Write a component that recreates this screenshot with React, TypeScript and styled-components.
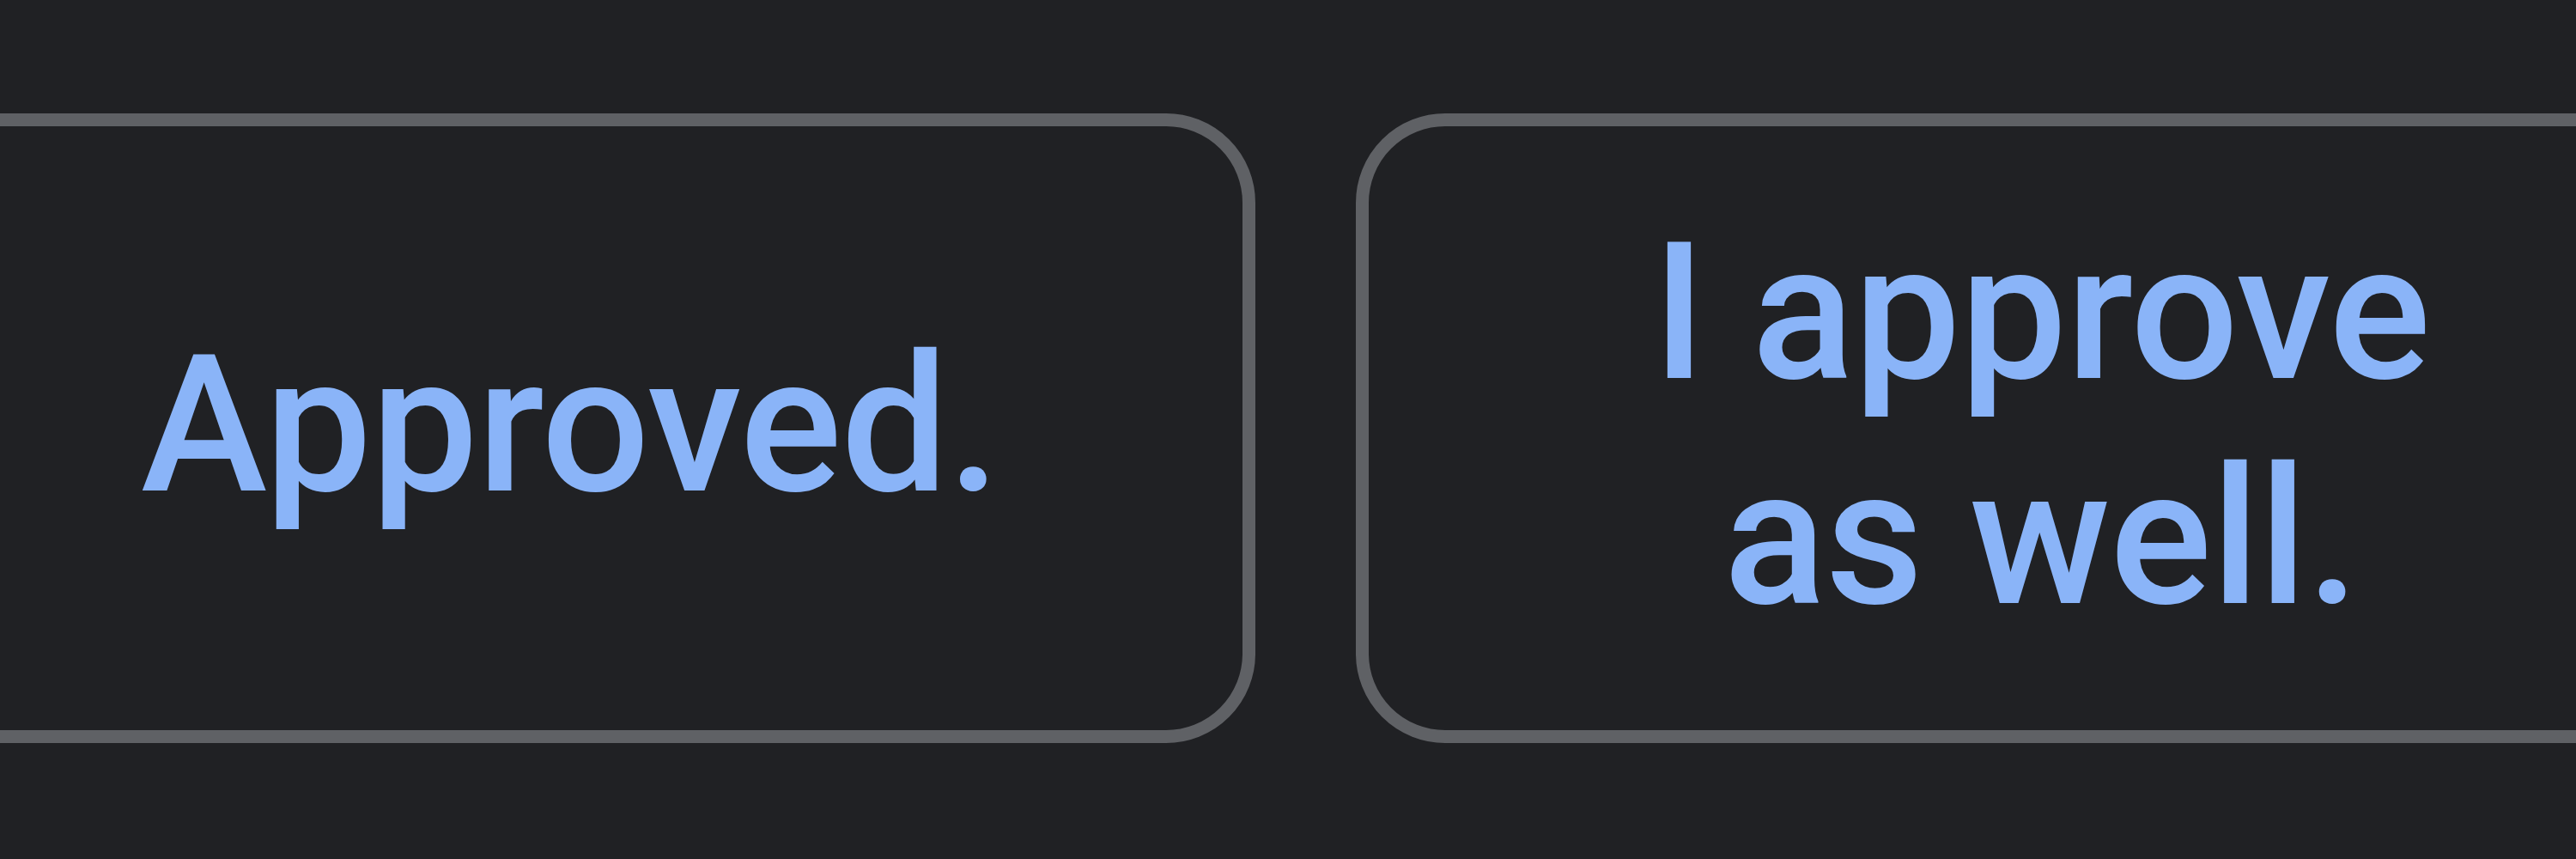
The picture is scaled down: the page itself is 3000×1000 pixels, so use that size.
import React from "react";
import styled, { createGlobalStyle } from "styled-components";

const GlobalStyle = createGlobalStyle`
  html, body {
    margin: 0;
    padding: 0;
    background: #202124;
    overflow: hidden;
  }
`;

const Page = styled.div`
  width: 3000px;
  height: 1000px;
  background: #202124;
  overflow: hidden;
`;

const ReplyRow = styled.div`
  display: flex;
  flex-direction: row;
  align-items: stretch;
  gap: 117px;
  padding-top: 132px;
  margin-left: -134px;
`;

const ReplyChip = styled.button`
  flex: 0 0 1596px;
  height: 733px;
  box-sizing: border-box;
  display: flex;
  align-items: center;
  justify-content: center;
  padding: 0 80px 8px;
  background: transparent;
  border: 15px solid #5f6165;
  border-radius: 104px;
  color: #8ab4f8;
  font-family: Roboto, "Open Sans", sans-serif;
  font-size: 222px;
  font-weight: 500;
  line-height: 262px;
  letter-spacing: -1px;
  text-align: center;
  cursor: pointer;
`;

const ChipText = styled.span`
  display: block;
  max-width: 1150px;
`;

const replies = ["Approved.", "I approve as well."];

export default function App() {
  return (
    <>
      <GlobalStyle />
      <Page>
        <ReplyRow>
          {replies.map((text) => (
            <ReplyChip key={text} type="button">
              <ChipText>{text}</ChipText>
            </ReplyChip>
          ))}
        </ReplyRow>
      </Page>
    </>
  );
}
